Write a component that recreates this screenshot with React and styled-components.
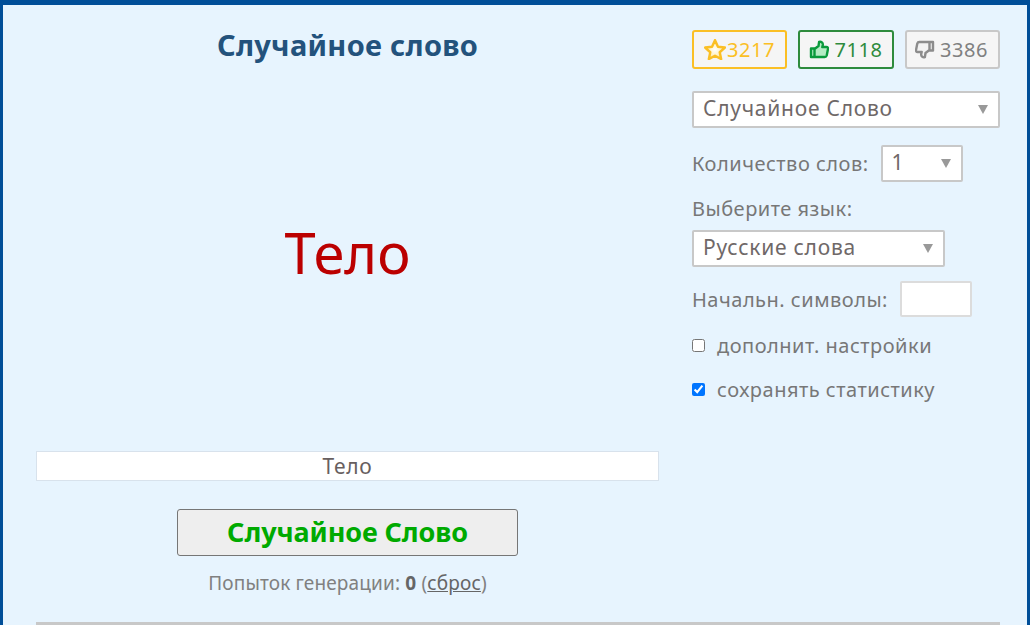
import React from 'react';
import styled, { createGlobalStyle } from 'styled-components';

const GlobalStyle = createGlobalStyle`
  html, body {
    margin: 0;
    padding: 0;
    height: 625px;
    overflow: hidden;
    background: #e7f4fe;
    font-family: "Noto Sans", "Open Sans", sans-serif;
  }
`;

const Frame = styled.div`
  box-sizing: border-box;
  width: 1030px;
  height: 625px;
  border-top: 5px solid #004e98;
  border-left: 3px solid #004e98;
  border-right: 3px solid #004e98;
  padding: 0 27px 0 33px;
  background: #e7f4fe;
  overflow: hidden;
`;

const Columns = styled.div`
  display: flex;
  justify-content: space-between;
  height: 617px;
`;

const MainColumn = styled.main`
  width: 623px;
  display: flex;
  flex-direction: column;
  align-items: center;
`;

const Title = styled.h1`
  margin: 22px 0 0;
  font-size: 29px;
  line-height: 36px;
  font-weight: 700;
  letter-spacing: 0.3px;
  color: #23527c;
`;

const WordArea = styled.div`
  height: 388px;
  flex: none;
  box-sizing: border-box;
  display: flex;
  align-items: center;
  justify-content: center;
  padding-bottom: 10px;
  font-size: 56px;
  color: #bb0000;
`;

const WordField = styled.div`
  box-sizing: border-box;
  width: 100%;
  height: 30px;
  background: #fff;
  border: 1px solid #d8e2ec;
  text-align: center;
  font-size: 21px;
  line-height: 29px;
  letter-spacing: 0.7px;
  color: #685f5f;
`;

const GenerateButton = styled.button`
  margin-top: 28px;
  width: 341px;
  height: 47px;
  background: #eeeeee;
  border: 1px solid #767676;
  border-radius: 3px;
  font-family: inherit;
  font-size: 27px;
  font-weight: 700;
  letter-spacing: -0.1px;
  color: #00aa00;
  padding: 0 0 3px;
`;

const Attempts = styled.p`
  margin: 15px 0 0;
  font-size: 19px;
  line-height: 24px;
  letter-spacing: 0.15px;
  color: #808080;
  b { color: #666; }
  a { color: #666; text-decoration: underline; }
`;

const Aside = styled.aside`
  width: 308px;
  padding-top: 25px;
  font-size: 20px;
  letter-spacing: 0.5px;
  color: #777;
`;

const Rating = styled.div`
  display: flex;
  justify-content: space-between;
`;

const RateBadge = styled.div`
  box-sizing: border-box;
  height: 39px;
  width: ${p => p.$w}px;
  display: flex;
  align-items: center;
  justify-content: center;
  gap: ${p => p.$gap}px;
  padding-right: ${p => p.$pr || 0}px;
  background: #f5f5f5;
  border: 2px solid ${p => p.$border};
  border-radius: 3px;
  color: ${p => p.$color};
  font-size: 20px;
  letter-spacing: 0.6px;

  svg { flex: none; }
`;

const SelectBox = styled.div`
  box-sizing: border-box;
  width: ${p => p.$w}px;
  height: 37px;
  display: flex;
  align-items: center;
  justify-content: space-between;
  padding: 0 10px 3px 9px;
  background: #fff;
  border: 2px solid #c8c8c8;
  border-radius: 2px;
  font-size: 21px;
  letter-spacing: 0.75px;
  color: #6f6868;
`;

const Caret = styled.span`
  width: 0;
  height: 0;
  margin-top: 3px;
  border-left: 5px solid transparent;
  border-right: 5px solid transparent;
  border-top: 9px solid #999;
`;

const TypeSelect = styled.div`
  margin-top: 22px;
`;

const Row = styled.div`
  display: flex;
  align-items: center;
  gap: 12px;
  margin-top: ${p => p.$top}px;
`;

const FieldLabel = styled.label`
  display: block;
  line-height: 28px;
  margin-top: 13px;
`;

const TextBox = styled.div`
  box-sizing: border-box;
  width: 72px;
  height: 36px;
  background: #fff;
  border: 2px solid #dcdcdc;
  border-radius: 2px;
`;

const Check = styled.input`
  width: 13px;
  height: 13px;
  margin: 0;
  flex: none;
`;

const Rule = styled.hr`
  margin: 0;
  border: none;
  height: 3px;
  background: #c8c8c8;
`;

const StarIcon = () => (
  <svg width="22" height="21" viewBox="1 1 20 19">
    <defs>
      <radialGradient id="starFill">
        <stop offset="0%" stopColor="#ffffff" />
        <stop offset="100%" stopColor="#ffe9a0" />
      </radialGradient>
    </defs>
    <path d="M11 2l2.700 6 6.300.7-4.700 4.300 1.300 6.200L11 16.200l-5.600 3 1.300-6.200L2 8.700 8.300 8z" fill="url(#starFill)" stroke="#fbbf24" strokeWidth="2.200" strokeLinejoin="round" />
  </svg>
);

const THUMB = 'M2 8.500h3.500V17H2zM5.500 9L9.500 6l.6-4.200c2.200-.6 4 1 3.700 3.200L13.300 7H17.500c1 0 1.700.9 1.500 2l-1.300 6.500c-.3 1-1 1.500-2 1.500H5.500z';

const ThumbUp = () => (
  <svg width="20" height="19" viewBox="0 0 20 19">
    <path d={THUMB} fill="#b5ecc4" stroke="#0a9a3c" strokeWidth="2.400" strokeLinejoin="round" />
  </svg>
);

const ThumbDown = () => (
  <svg width="20" height="19" viewBox="0 0 20 19">
    <path d={THUMB} transform="rotate(180 10 9.500)" fill="#f2f2f2" stroke="#8c8c8c" strokeWidth="2.400" strokeLinejoin="round" />
  </svg>
);

export default function App() {
  return (
    <>
      <GlobalStyle />
      <Frame>
        <Columns>
          <MainColumn>
            <Title>Случайное слово</Title>
            <WordArea>Тело</WordArea>
            <WordField>Тело</WordField>
            <GenerateButton>Случайное Слово</GenerateButton>
            <Attempts>Попыток генерации: <b>0</b> (<a href="#reset">сброс</a>)</Attempts>
          </MainColumn>
          <Aside>
            <Rating>
              <RateBadge $w={95} $gap={1} $border="#fbbf24" $color="#fbbf24"><StarIcon />3217</RateBadge>
              <RateBadge $w={96} $gap={5} $border="#2e8b3d" $color="#2e8b3d"><ThumbUp />7118</RateBadge>
              <RateBadge $w={95} $gap={5} $pr={2} $border="#c8c8c8" $color="#808080"><ThumbDown />3386</RateBadge>
            </Rating>
            <TypeSelect>
              <SelectBox $w={308}>Случайное Слово<Caret /></SelectBox>
            </TypeSelect>
            <Row $top={17}>
              Количество слов:
              <SelectBox $w={82}>1<Caret /></SelectBox>
            </Row>
            <FieldLabel>Выберите язык:</FieldLabel>
            <Row $top={7}>
              <SelectBox $w={253}>Русские слова<Caret /></SelectBox>
            </Row>
            <Row $top={14}>
              Начальн. символы:
              <TextBox />
            </Row>
            <Row $top={15}>
              <Check type="checkbox" readOnly />
              дополнит. настройки
            </Row>
            <Row $top={17}>
              <Check type="checkbox" defaultChecked />
              сохранять статистику
            </Row>
          </Aside>
        </Columns>
        <Rule />
      </Frame>
    </>
  );
}
